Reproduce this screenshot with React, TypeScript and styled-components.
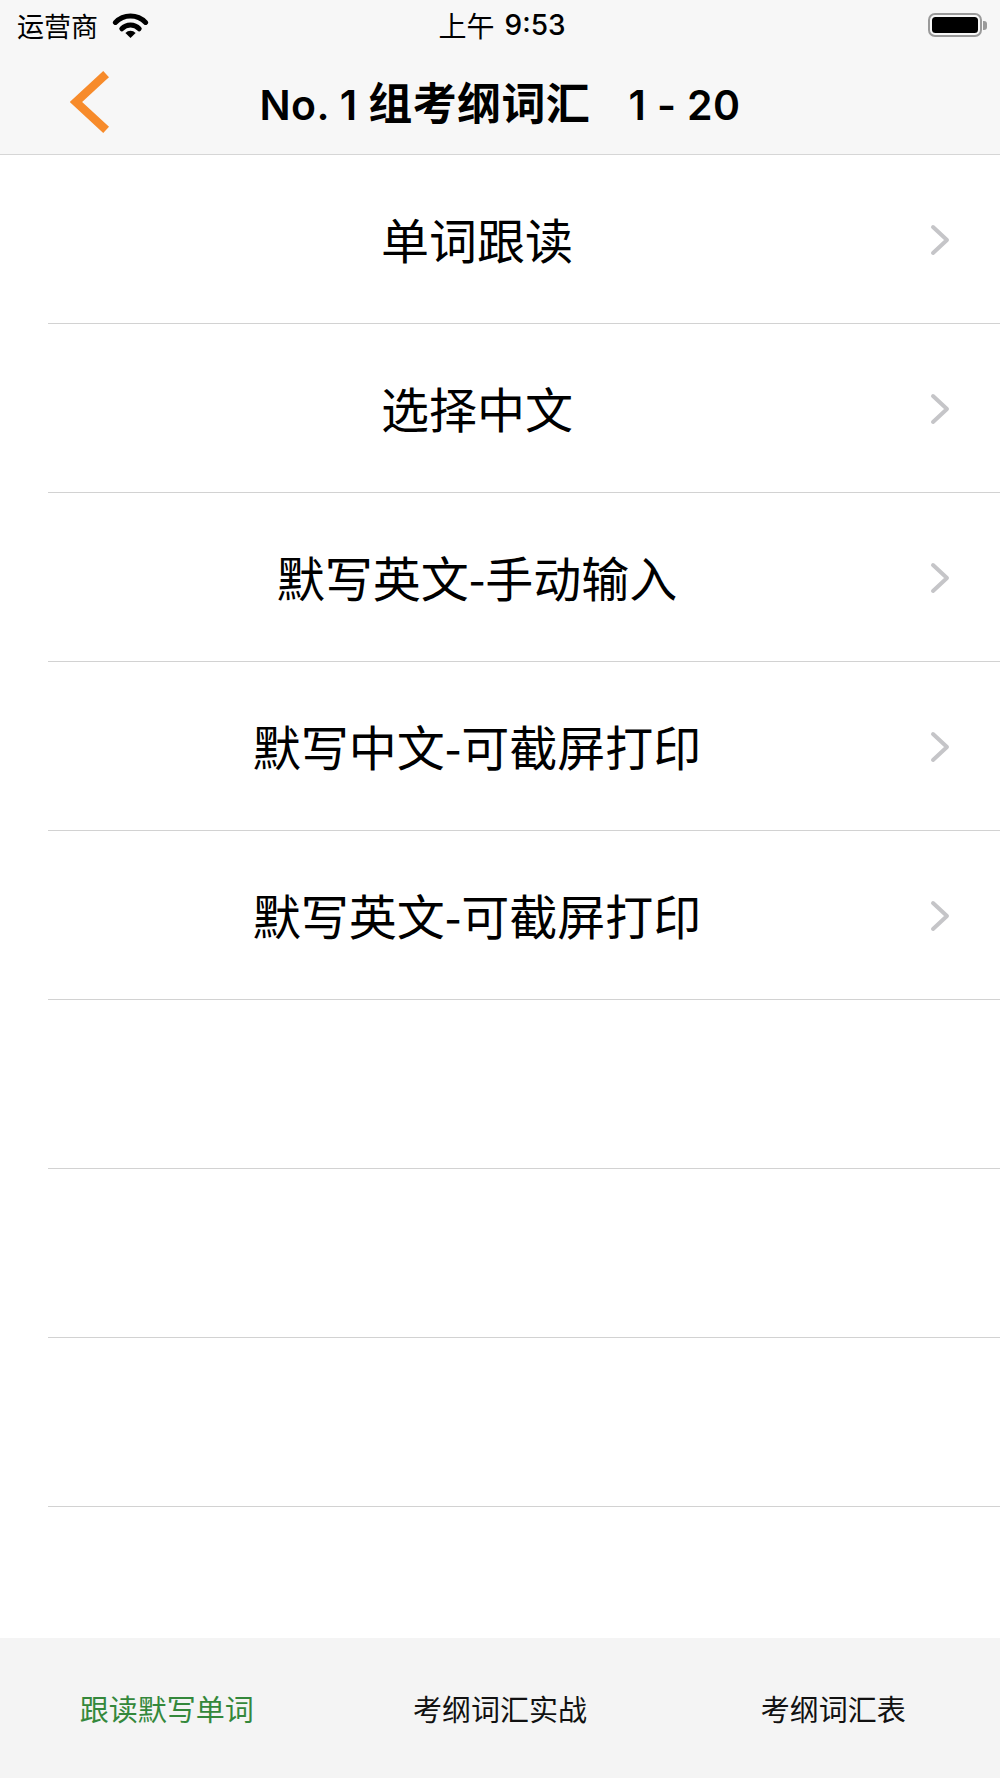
import React from 'react';
import styled, { createGlobalStyle } from 'styled-components';

const GlobalStyle = createGlobalStyle`
  html, body {
    margin: 0;
    padding: 0;
    background: #ffffff;
  }
  body {
    font-family: 'Noto Sans CJK SC', 'Noto Sans', sans-serif;
    color: #000000;
  }
  * {
    box-sizing: border-box;
  }
`;

const SPage = styled.div`
  width: 1000px;
  height: 1778px;
  display: flex;
  flex-direction: column;
  overflow: hidden;
  background: #ffffff;
`;

const SHeader = styled.header`
  background: #f7f7f7;
  border-bottom: 1px solid #d6d6d6;
  display: flex;
  flex-direction: column;
`;

const SStatusBar = styled.div`
  height: 50px;
  display: grid;
  grid-template-columns: 1fr auto 1fr;
  align-items: center;
  padding: 0 13px 0 17px;
`;

const SCarrier = styled.div`
  display: flex;
  align-items: center;
  gap: 14px;
  font-size: 27px;
  line-height: 1;
`;

const STime = styled.div`
  font-family: Inter, 'Noto Sans CJK SC', sans-serif;
  font-size: 28px;
  font-weight: 500;
  line-height: 1;
  display: flex;
  align-items: center;
  gap: 10px;
  & > span:first-child {
    font-family: 'Noto Sans CJK SC', sans-serif;
    font-weight: 400;
  }
`;

const SBattery = styled.div`
  justify-self: end;
  display: flex;
  align-items: center;
  gap: 1px;
`;

const SBatteryBody = styled.div`
  width: 54px;
  height: 24px;
  border: 2.5px solid #9a9a9a;
  border-radius: 7px;
  padding: 2px;
  display: flex;
`;

const SBatteryLevel = styled.div`
  flex: 1;
  background: #000000;
  border-radius: 3.5px;
`;

const SBatteryNub = styled.div`
  width: 4px;
  height: 9px;
  background: #9a9a9a;
  border-radius: 0 3px 3px 0;
`;

const SNavBar = styled.div`
  height: 104px;
  display: grid;
  grid-template-columns: 1fr auto 1fr;
  align-items: center;
`;

const SBackButton = styled.button`
  border: none;
  background: none;
  padding: 0 0 0 70px;
  margin: 0;
  display: flex;
  align-items: center;
  justify-self: start;
  cursor: pointer;
`;

const STitle = styled.h1`
  margin: 0;
  font-family: Inter, 'Noto Sans CJK SC', sans-serif;
  font-size: 41px;
  font-weight: 600;
  white-space: pre;
  line-height: 1;
  letter-spacing: 0.4px;
  & > span {
    font-family: 'Noto Sans CJK SC', sans-serif;
    font-size: 44px;
    font-weight: 600;
    margin-right: 6px;
  }
`;

const SList = styled.div`
  flex: 1;
  display: flex;
  flex-direction: column;
`;

const SRow = styled.div<{ $empty?: boolean }>`
  height: 169px;
  flex-shrink: 0;
  display: flex;
  align-items: center;
  padding: 0 50px 0 24px;
  background: linear-gradient(#d2d2d2, #d2d2d2) no-repeat 48px 100% /
    calc(100% - 48px) 1px;
  cursor: ${({ $empty }) => ($empty ? 'default' : 'pointer')};
`;

const SRowLabel = styled.div`
  flex: 1;
  text-align: center;
  font-size: 48px;
  line-height: 1;
  font-weight: 400;
  padding-bottom: 4px;
`;

const STabBar = styled.nav`
  height: 140px;
  flex-shrink: 0;
  background: #f4f4f4;
  display: grid;
  grid-template-columns: repeat(3, 1fr);
  align-items: center;
`;

const STabItem = styled.div<{ $active?: boolean }>`
  text-align: center;
  font-size: 29px;
  line-height: 1;
  color: ${({ $active }) => ($active ? '#34883b' : '#111111')};
  cursor: pointer;
`;

const WifiIcon = () => (
  <svg width="37" height="27" viewBox="0 0 37 27">
    <path
      d="M3.4 10.4 A21 21 0 0 1 33.6 10.4"
      fill="none"
      stroke="#000"
      strokeWidth="5"
      strokeLinecap="round"
    />
    <path
      d="M9.8 16.8 A12 12 0 0 1 27.2 16.8"
      fill="none"
      stroke="#000"
      strokeWidth="5"
      strokeLinecap="round"
    />
    <path d="M18.5 26 L13.4 20.9 A7.2 7.2 0 0 1 23.6 20.9 Z" fill="#000" />
  </svg>
);

const BackChevron = () => (
  <svg width="40" height="64" viewBox="0 0 40 64">
    <polyline
      points="33,7 6,32 33,57"
      fill="none"
      stroke="#f78b2b"
      strokeWidth="8.5"
      strokeLinecap="square"
      strokeLinejoin="miter"
    />
  </svg>
);

const RowChevron = () => (
  <svg width="20" height="32" viewBox="0 0 20 32">
    <polyline
      points="3,3 17,16 3,29"
      fill="none"
      stroke="#c5c5c8"
      strokeWidth="4"
      strokeLinecap="round"
      strokeLinejoin="round"
    />
  </svg>
);

const items = [
  '单词跟读',
  '选择中文',
  '默写英文-手动输入',
  '默写中文-可截屏打印',
  '默写英文-可截屏打印',
];

const tabs = ['跟读默写单词', '考纲词汇实战', '考纲词汇表'];

export default function App() {
  return (
    <SPage>
      <GlobalStyle />
      <SHeader>
        <SStatusBar>
          <SCarrier>
            运营商
            <WifiIcon />
          </SCarrier>
          <STime>
            <span>上午</span>
            <span>9:53</span>
          </STime>
          <SBattery>
            <SBatteryBody>
              <SBatteryLevel />
            </SBatteryBody>
            <SBatteryNub />
          </SBattery>
        </SStatusBar>
        <SNavBar>
          <SBackButton aria-label="返回">
            <BackChevron />
          </SBackButton>
          <STitle>
            No. 1 <span>组考纲词汇</span>   1 - 20
          </STitle>
          <div />
        </SNavBar>
      </SHeader>
      <SList>
        {items.map((item) => (
          <SRow key={item}>
            <SRowLabel>{item}</SRowLabel>
            <RowChevron />
          </SRow>
        ))}
        {[0, 1, 2].map((i) => (
          <SRow key={`empty-${i}`} $empty />
        ))}
      </SList>
      <STabBar>
        {tabs.map((tab, i) => (
          <STabItem key={tab} $active={i === 0}>
            {tab}
          </STabItem>
        ))}
      </STabBar>
    </SPage>
  );
}
